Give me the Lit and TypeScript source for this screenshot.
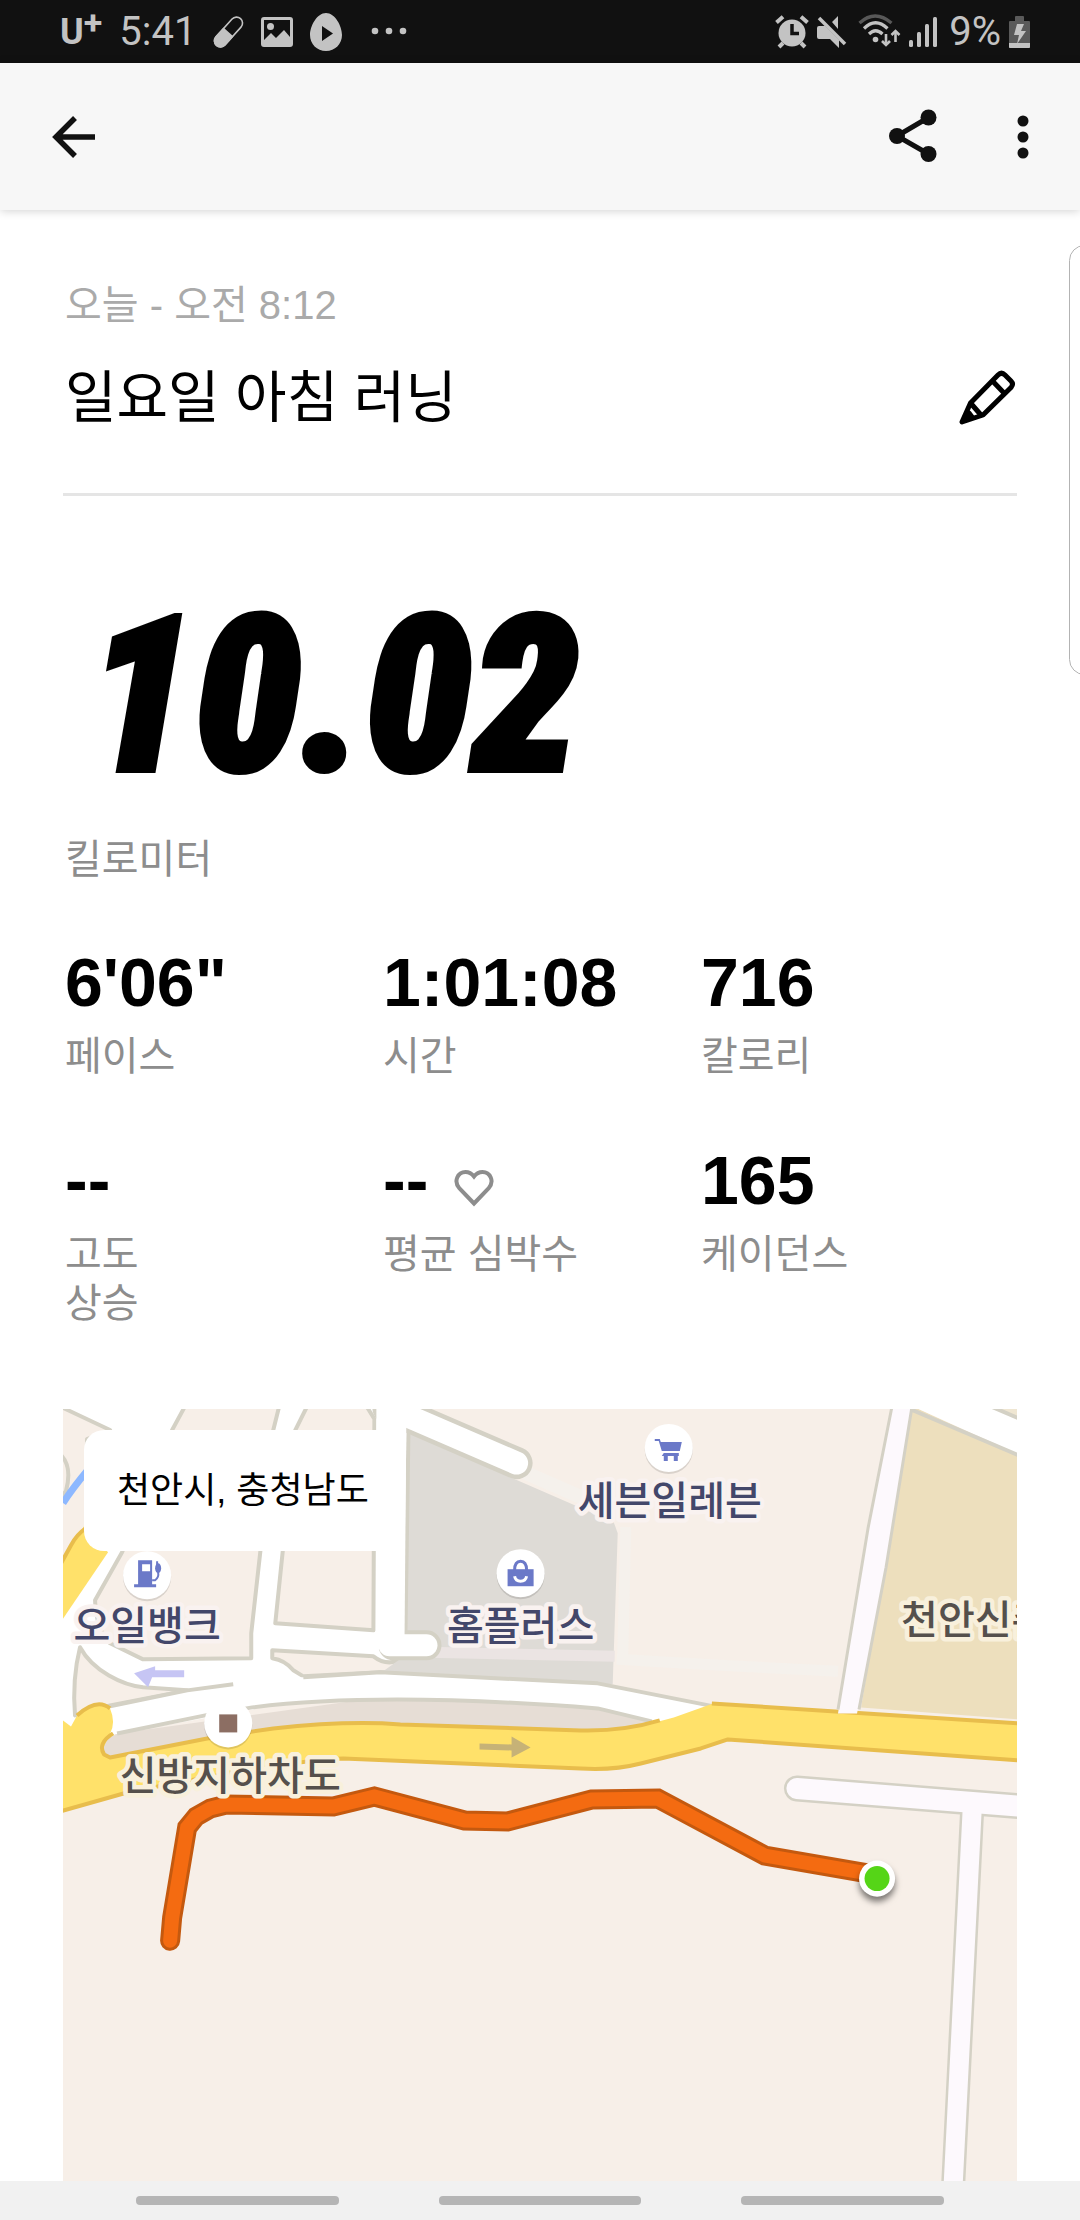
import { LitElement, html, svg, css } from "lit";
import { customElement, property } from "lit/decorators.js";

interface Stat {
  value: string;
  label: string[];
  heart?: boolean;
}

const STATS: Stat[] = [
  { value: "6'06\"", label: ["페이스"] },
  { value: "1:01:08", label: ["시간"] },
  { value: "716", label: ["칼로리"] },
  { value: "--", label: ["고도", "상승"] },
  { value: "--", label: ["평균 심박수"], heart: true },
  { value: "165", label: ["케이던스"] },
];

@customElement("status-bar")
class StatusBar extends LitElement {
  static styles = css`
    :host {
      display: flex;
      justify-content: space-between;
      align-items: center;
      height: 63px;
      padding: 0 50px 0 60px;
      background: #111;
      color: #c3c3c3;
      font: 400 40px/66px Roboto, sans-serif;
    }
    .group {
      display: flex;
      align-items: center;
    }
    .left {
      gap: 17px;
    }
    .right {
      gap: 8px;
    }
    .carrier {
      display: flex;
      font: 700 36px/70px Roboto, sans-serif;
    }
    .plus {
      font-size: 34px;
      line-height: 50px;
    }
    svg {
      display: block;
      fill: currentColor;
    }
  `;

  render() {
    return html`
      <div class="group left">
        <span class="carrier">U<span class="plus">+</span></span>
        <span>5:41</span>
        <svg width="31" height="38" viewBox="0 0 31 38">
          <g transform="rotate(42 15.5 19)">
            <rect x="9.5" y="1" width="12" height="36" rx="6" fill="none" stroke="currentColor" stroke-width="1.6" />
            <path d="M8.7 19h13.6v12a6.8 6.8 0 0 1-13.6 0z" />
          </g>
        </svg>
        <svg width="32" height="38" viewBox="0 0 32 38">
          <path
            fill-rule="evenodd"
            d="M3 4h26a3 3 0 0 1 3 3v24a3 3 0 0 1-3 3H3a3 3 0 0 1-3-3V7a3 3 0 0 1 3-3zM3 7v20l7-7 5 5 8-8 6 7V7z"
          />
          <circle cx="9.500" cy="13.500" r="3.500" />
        </svg>
        <svg width="32" height="38" viewBox="0 0 32 38">
          <path fill-rule="evenodd" d="M16 0C25 0 32 13 32 22S25 38 16 38 0 31 0 22 7 0 16 0zM12 13v15l11-7.500z" />
        </svg>
        <svg width="48" height="38" viewBox="0 0 48 38">
          <circle cx="16" cy="18" r="3.300" /><circle cx="30" cy="18" r="3.300" /><circle cx="44" cy="18" r="3.300" />
        </svg>
      </div>
      <div class="group right">
        <svg width="34" height="34" viewBox="0 0 34 34">
          <circle cx="17" cy="18" r="13.500" />
          <path
            d="M1.500 7.500 8 1.800M26 1.800 32.500 7.500M8 28l-4 4M26 28l4 4"
            stroke="currentColor"
            stroke-width="4"
          />
          <path d="M17 9v9.500h7" fill="none" stroke="#111" stroke-width="3.500" />
        </svg>
        <svg width="33" height="34" viewBox="0 0 33 34">
          <path d="M0 13q0-2 2-2h6L22 25v8l-9-9H2q-2 0-2-2zM15 7l6-6v13z" />
          <path d="M2 3 28 29" stroke="currentColor" stroke-width="3.500" />
        </svg>
        <svg width="43" height="36" viewBox="0 0 43 36">
          <g fill="none" stroke="currentColor" stroke-width="3.200">
            <path d="M1.500 9q15.500-14 32 0" opacity=".4" />
            <path d="M6 14.500q11.500-11.500 23.500 0" />
            <path d="M11 20q6.500-6.500 13.500 0" />
            <path d="M28 20v10M37.500 28V18" stroke-width="2.600" />
            <path d="m24 27 4 4 4-4M33.500 21l4-4 4 4" stroke-width="2.600" />
          </g>
          <circle cx="17.500" cy="25.500" r="2.800" />
        </svg>
        <svg width="32" height="34" viewBox="0 0 32 34">
          <rect y="25" width="4" height="7" rx="1.500" />
          <rect x="8" y="17" width="4" height="15" rx="1.500" />
          <rect x="16" y="9" width="4" height="23" rx="1.500" />
          <rect x="24" y="2" width="4" height="30" rx="1.500" />
        </svg>
        <span>9%</span>
        <svg width="21" height="34" viewBox="0 0 21 34">
          <path
            d="M6 2q0-1 1-1h7q1 0 1 1v4h5q1 0 1 1v25q0 1-1 1H1q-1 0-1-1V7q0-1 1-1h5z"
            fill="#5a5a5a"
          />
          <path d="M0 28h21v4q0 1-1 1H1q-1 0-1-1z" />
          <path d="M8 9h7l-3 7h5L8 29l2-9H5z" />
        </svg>
      </div>
    `;
  }
}

@customElement("app-bar")
class AppBar extends LitElement {
  static styles = css`
    :host {
      display: flex;
      align-items: center;
      height: 147px;
      padding: 0 37px 0 48px;
      background: #f7f7f7;
      box-shadow: 0 1px 9px rgba(0, 0, 0, 0.18);
      color: #111;
    }
    button {
      display: block;
      padding: 0;
      border: 0;
      background: none;
      color: inherit;
    }
    .share {
      margin-left: auto;
      margin-right: 62px;
    }
    svg {
      display: block;
      fill: none;
      stroke: currentColor;
    }
  `;

  render() {
    return html`
      <button aria-label="뒤로">
        <svg width="52" height="56" viewBox="0 0 52 56" stroke-width="5.500">
          <path d="M27 9 8 28l19 19M8 28h39" />
        </svg>
      </button>
      <button class="share" aria-label="공유">
        <svg width="56" height="56" viewBox="0 0 56 56" stroke-width="5">
          <path d="M43.500 8.500 12 27l31.500 18" />
          <g fill="currentColor" stroke="none">
            <circle cx="43.500" cy="8.500" r="8" /><circle cx="12" cy="27" r="8" /><circle cx="43.500" cy="45" r="8" />
          </g>
        </svg>
      </button>
      <button aria-label="더보기">
        <svg width="40" height="56" viewBox="0 0 40 56">
          <g fill="currentColor" stroke="none">
            <circle cx="20" cy="12" r="5.500" /><circle cx="20" cy="28" r="5.500" /><circle cx="20" cy="44" r="5.500" />
          </g>
        </svg>
      </button>
    `;
  }
}

@customElement("run-stat")
class RunStat extends LitElement {
  @property({ attribute: false }) stat!: Stat;

  static styles = css`
    :host {
      display: flex;
      flex-direction: column;
      gap: 14px;
    }
    .value {
      display: flex;
      align-items: center;
      gap: 26px;
      font-size: 68px;
      line-height: 72px;
      font-weight: 700;
      color: #000;
    }
    .label {
      line-height: 49px;
      font-size: 40px;
      color: #8d8d8d;
    }
    .line {
      display: block;
    }
    svg {
      display: block;
      margin-top: 16px;
    }
  `;

  render() {
    const { value, label, heart } = this.stat;
    return html`
      <div class="value">
        <span>${value}</span>
        ${heart
          ? html`<svg width="40" height="38" viewBox="0 0 40 38">
              <path
                d="M20 34.500 5.500 19.500C-1 12 4 3 11.500 3Q16.500 3 20 7.500 23.500 3 28.500 3C36 3 41 12 34.500 19.500z"
                fill="none"
                stroke="#8d8d8d"
                stroke-width="4"
              />
            </svg>`
          : null}
      </div>
      <div class="label">${label.map((l) => html`<span class="line">${l}</span>`)}</div>
    `;
  }
}

const ROUTE =
  "107,531 109,508 124,418 133,407 147,399 163,395 270,397 311,387 401,411 444,412 528,390 594,389 701,446 805,464";

const poi = (x: number, y: number, glyph: unknown) => svg`
  <g transform="translate(${x} ${y})">
    <circle cy="2" r="24" fill="#000" opacity=".12" />
    <circle r="24" fill="#fff" />
    ${glyph}
  </g>`;

@customElement("run-map")
class RunMap extends LitElement {
  static styles = css`
    :host {
      display: block;
      position: relative;
      overflow: hidden;
      background: #f7efe8;
    }
    .canvas {
      position: absolute;
      inset: 0;
      width: 100%;
      height: 100%;
    }
    .edge,
    .thin {
      fill: none;
      stroke: #d4d1c5;
      stroke-width: 4;
      stroke-linejoin: round;
    }
    .thin {
      stroke-width: 3;
    }
    .block {
      fill: #f7efe8;
      stroke: #d4d1c5;
      stroke-width: 4;
      stroke-linejoin: round;
    }
    .casing {
      fill: none;
      stroke: #d4d1c5;
      stroke-linecap: round;
    }
    .road {
      fill: none;
      stroke: #fff;
      stroke-linecap: round;
    }
    .lane {
      fill: none;
      stroke: #fdf9fd;
      stroke-linecap: round;
    }
    .gold {
      fill: none;
      stroke: #e8bd4c;
      stroke-width: 4;
      stroke-linejoin: round;
    }
    .name {
      font-size: 40px;
      font-weight: 500;
      text-anchor: middle;
      fill: #43476a;
      stroke: #f9f2f0;
      stroke-width: 9;
      stroke-linejoin: round;
      paint-order: stroke;
    }
    .place {
      fill: #55504c;
      stroke: #f8f0dc;
    }
    .start {
      text-anchor: start;
    }
    .pin {
      filter: drop-shadow(0 5px 3px rgba(0, 0, 0, 0.5));
    }
    .chip {
      position: absolute;
      top: 21px;
      left: 21px;
      padding: 34px 33px;
      border-radius: 20px;
      background: #fff;
      color: #000;
      font-size: 36px;
      line-height: 53px;
    }
  `;

  render() {
    return html`
      <svg class="canvas" viewBox="0 0 954 771" preserveAspectRatio="xMinYMin slice">
        <path d="M0 0H360L345 22 342 223 335 263 190 300 50 325 0 330z" fill="#fff" />
        <path d="M-4-3 47 21 24 30V120L-4 156z" class="block" />
        <path d="M-4 44Q10 56 3 82L-4 90z" fill="#fff" class="edge" />
        <path d="M0 94Q9 80 24 62" fill="none" stroke="#8db8ff" stroke-width="7" />
        <path d="M122-3 109 21 59 143 32 191Q33 220 47 234L80 250 188 249V224L197 143 210 21 216-3z" class="block" />
        <path d="M244-3 232 21 212 214 310 221 311 10 303-3z" class="block" />
        <path d="M209 241 310 247Q324 258 340 249L380 247 400 266 317 263 240 267 230 261Q222 251 209 249z" class="block" />
        <path d="M17 238C30 262 60 276 80 278L124 281 47 296 12 306Q9 270 17 238z" class="block" />

        <path d="M345 23 460 74 550 113 554 124 549 275 317 264 342 246z" fill="#dedbd6" />
        <path d="M365 243 551 247" stroke="#ebe4e3" stroke-width="11" />
        <path d="M458 62 545 100" stroke="#f5f1ec" stroke-width="14" />
        <path d="M562 118 559 247M553 250 657 256 774 262" fill="none" stroke="#f5f1ec" stroke-width="11" />
        <path d="M345 22 342 225" class="edge" />
        <path d="M325-1 351 10 453 54" class="casing" stroke-width="32" />
        <path d="M330 236H363" class="casing" stroke-width="30" />
        <path d="M325-1 351 10 453 54" class="road" stroke-width="23" />
        <path d="M326 236H363" class="road" stroke-width="22" />
        <path d="M313 0H343L341 240H313z" fill="#fff" />

        <path d="M54 324 39 333V345L47 348 210 321 284 316 534 323 600 311 534 299 317 288z" fill="#e6ddd5" />
        <path d="M50 325 47 298 124 281 194 272 240 268 317 263 534 274 650 296 600 316 534 299Q317 282 189 298L142 306z" fill="#fff" />
        <path d="M54 324 142 306 189 298Q317 282 534 299L588 312M240 268 317 263 534 274 650 297M47 297 124 281 170 275" class="edge" />

        <path d="M-3 154 21 117 45 143-3 214z" fill="#ffe16a" />
        <path d="M-3 156 8 136Q14 125 23 119" class="gold" />
        <path
          d="M-3 309 8 317 14 306Q34 288 47 299 53 313 47 324L39 341 47 348 144 329 210 319Q284 311 337 315L517 321Q560 322 610 308L652 293 954 313V351L664 330 637 339 577 354Q550 361 517 359L280 349Q230 350 64 383L-3 402z"
          fill="#ffe16a"
        />
        <path
          d="M14 306Q34 288 47 299M50 324Q34 334 41 345L47 348 144 329 210 319Q284 311 337 315L517 321Q560 322 596 311M648 294 954 314M956 351 664 330 637 339 577 354Q550 361 517 359L280 349Q230 350 64 383L-3 402"
          class="gold"
        />

        <path d="M848-3 954 46V310L797 298z" fill="#eddfbd" />
        <path d="M850-2 930-3 956 8V46z" fill="#fff" />
        <path d="M930-3H956V10z" fill="#efe6d2" />
        <path d="M848 1 956 47M928-2 956 10" class="edge" />
        <path d="M828-3 804 119 774 304H793L822 158 848-3z" fill="#fdf9fd" />
        <path d="M828-3 804 119 774 300M848-3 822 158 795 300" class="thin" />

        <path d="M733 379 960 397" class="casing" stroke-width="26" />
        <path d="M908 400 889 775" class="casing" stroke-width="24" />
        <path d="M733 379 960 397" class="lane" stroke-width="21" />
        <path d="M908 400 889 775" class="lane" stroke-width="19" />

        <path d="M71 264 92 257V261H121V268H89L85 278z" fill="#c6c5f4" />
        <path d="M416 334 448 335V327L467 338 448 348V341L416 340z" fill="#c6b277" />

        <polyline points=${ROUTE} fill="none" stroke="#c4590f" stroke-width="20" stroke-linecap="round" />
        <polyline points=${ROUTE} fill="none" stroke="#f46b11" stroke-width="14" stroke-linecap="round" />
        <circle class="pin" cx="813" cy="469" r="18" fill="#fff" />
        <circle cx="813" cy="469" r="12.500" fill="#55d517" />

        ${poi(
          84,
          166,
          svg`<path fill="#6b79c8" fill-rule="evenodd" d="M-9-15H5V9H9V12H-13V9H-9zM-5-11V-4H3V-11z"/>
            <path fill="none" stroke="#6b79c8" stroke-width="2" d="M5 5H8Q12 2 11-3M10-14V-6"/>
            <ellipse cx="11" cy="-7" rx="3" ry="5" fill="#6b79c8"/>`
        )}
        ${poi(
          457,
          164,
          svg`<path fill="#6b79c8" d="M-13-4H13V13H-13z"/>
            <path fill="none" stroke="#6b79c8" stroke-width="3" d="M-6-3Q-6-12 0-12T6-3"/>
            <path fill="none" stroke="#fff" stroke-width="3" d="M-6 3Q-5 8 0 8T6 3"/>`
        )}
        ${poi(
          605,
          39,
          svg`<path fill="#6b79c8" d="M-14-9H-9L-8-6H13L11 3H-7L-10-7H-14zM-5 5H10V8H9V13H5V8H-1V13H-5V8H-7z"/>`
        )}
        ${poi(165, 314, svg`<rect x="-9" y="-9" width="18" height="18" fill="#8c6e63"/>`)}

        <text class="name" x="84" y="231">오일뱅크</text>
        <text class="name" x="457" y="231">홈플러스</text>
        <text class="name" x="606" y="106">세븐일레븐</text>
        <text class="name place" x="167" y="381">신방지하차도</text>
        <text class="name place start" x="837" y="225">천안신촌초</text>
      </svg>
      <span class="chip">천안시, 충청남도</span>
    `;
  }
}

@customElement("app-root")
class AppRoot extends LitElement {
  static styles = css`
    :host {
      display: flex;
      flex-direction: column;
      position: relative;
      overflow: hidden;
      min-height: 100vh;
      background: #fff;
      font-family: "Liberation Sans", "Noto Sans CJK KR", sans-serif;
    }
    app-bar {
      position: relative;
    }
    main {
      flex: 1;
      display: flex;
      flex-direction: column;
      padding: 71px 63px 0;
    }
    .date,
    h1,
    .unit,
    run-stat {
      padding-left: 2px;
    }
    .date {
      margin: 0;
      font-size: 40px;
      line-height: 48px;
      color: #aaa;
    }
    .heading {
      display: flex;
      justify-content: space-between;
      align-items: center;
      padding: 33px 0 59px;
      border-bottom: 3px solid #e5e5e5;
    }
    h1 {
      margin: 0;
      font-size: 56px;
      line-height: 72px;
      font-weight: 400;
      color: #000;
    }
    .edit {
      padding: 0;
      border: 0;
      background: none;
      color: #000;
    }
    .edit svg {
      display: block;
    }
    .distance {
      margin: 121px 0 58px;
      padding-left: 24px;
      font-family: "Roboto Condensed", Roboto, sans-serif;
      font-size: 216px;
      line-height: 160px;
      font-weight: 900;
      font-style: italic;
      color: #000;
      -webkit-text-stroke: 6px #000;
    }
    .unit {
      margin: 0 0 63px;
      font-size: 40px;
      line-height: 48px;
      color: #8d8d8d;
    }
    .stats {
      display: grid;
      grid-template-columns: repeat(3, 1fr);
      row-gap: 63px;
      margin-bottom: 81px;
    }
    run-map {
      flex: 1;
      min-height: 480px;
    }
    .panel {
      position: absolute;
      top: 245px;
      right: -20px;
      width: 29px;
      height: 428px;
      border: 1px solid #b3b3b3;
      border-radius: 16px;
    }
    nav {
      display: grid;
      grid-template-columns: repeat(3, 1fr);
      align-items: center;
      justify-items: center;
      height: 39px;
      padding: 0 86px;
      background: #f1f1f1;
    }
    .key {
      width: 67%;
      height: 9px;
      padding: 0;
      border: 0;
      border-radius: 4px;
      background: #b5b5b5;
    }
  `;

  render() {
    return html`
      <status-bar></status-bar>
      <app-bar></app-bar>
      <main>
        <p class="date">오늘 - 오전 8:12</p>
        <div class="heading">
          <h1>일요일 아침 러닝</h1>
          <button class="edit" aria-label="제목 편집">
            <svg width="58" height="58" viewBox="0 0 58 58" fill="none" stroke="currentColor" stroke-width="5" stroke-linejoin="round">
              <path d="M3 53 11.500 34 39 6Q42.500 2.500 46 6L52 12Q55 15 52 18.500L24 46z" />
              <path d="M33.500 12 45 24M11.500 34 22 46M5 51 10 44 13 48z" />
            </svg>
          </button>
        </div>
        <div class="distance">10.02</div>
        <p class="unit">킬로미터</p>
        <section class="stats">${STATS.map((s) => html`<run-stat .stat=${s}></run-stat>`)}</section>
        <run-map></run-map>
      </main>
      <nav>
        <button class="key" aria-label="최근 앱"></button>
        <button class="key" aria-label="홈"></button>
        <button class="key" aria-label="뒤로"></button>
      </nav>
      <div class="panel"></div>
    `;
  }
}
